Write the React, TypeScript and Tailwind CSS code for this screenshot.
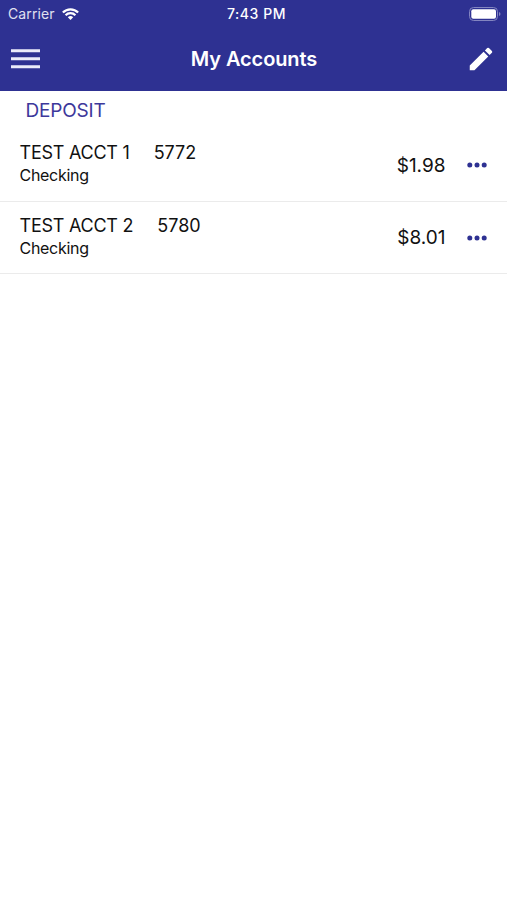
const accounts = [
  { name: "TEST ACCT 1", number: "5772", kind: "Checking", balance: "$1.98" },
  { name: "TEST ACCT 2", number: "5780", kind: "Checking", balance: "$8.01" },
];

export default function App() {
  return (
    <div className="h-[900px] w-[507px] overflow-hidden bg-white font-['Inter',sans-serif] text-[#111]">
      <header className="h-[91px] bg-[#2e3192] text-white">
        <div className="grid h-[27px] grid-cols-3 items-center text-[14px] leading-none">
          <div className="flex items-center gap-[7px] pl-[8px] text-[#e0e0f0]">
            <span className="tracking-[0.1px]">Carrier</span>
            <svg width="17" height="12" viewBox="0 0 17 12" fill="none" stroke="white" strokeWidth="2.3">
              <path d="M.9 4.5a10.7 10.7 0 0 1 15.2 0M3.6 7.2a6.9 6.9 0 0 1 9.8 0" />
              <path d="M8.5 12L5.8 9.3a3.8 3.8 0 0 1 5.4 0z" fill="white" stroke="none" />
            </svg>
          </div>
          <div className="pl-[6px] text-center font-medium tracking-[0.55px]">7:43 PM</div>
          <div className="flex justify-end pr-[6px]">
            <svg width="32" height="14" viewBox="0 0 32 14">
              <rect x=".5" y=".5" width="28" height="13" rx="4" fill="none" stroke="#8385c0" />
              <rect x="2.3" y="2.3" width="24.7" height="9.4" rx="2" fill="white" />
              <path d="M30 5v4q1.5-.6 1.5-2T30 5" fill="#8385c0" />
            </svg>
          </div>
        </div>
        <div className="flex h-16 items-center justify-between pl-[11px] pr-[11px]">
          <svg width="29" height="20" viewBox="0 0 29 20" stroke="#ebebfa" strokeWidth="3">
            <path d="M0 1.8h29M0 9.8h29M0 17.8h29" />
          </svg>
          <h1 className="-mr-0.5 text-[20px] font-semibold tracking-[-0.1px]">My Accounts</h1>
          <svg className="mb-px" width="30" height="30" viewBox="0 0 24 24" fill="white">
            <path d="M3 17.25V21h3.75L17.81 9.94l-3.75-3.75zM20.71 7.04a1 1 0 0 0 0-1.41l-2.34-2.34a1 1 0 0 0-1.41 0l-1.83 1.83 3.75 3.75z" />
          </svg>
        </div>
      </header>
      <main>
        <h2 className="h-[38px] pl-[25.5px] pt-[5.5px] text-[19px] leading-7 tracking-[-0.2px] text-[#3d389b]">DEPOSIT</h2>
        {accounts.map((a) => (
          <div key={a.number} className="flex h-[72.7px] items-center border-b border-[#ebebeb] pl-[19.5px] pr-[20.5px]">
            <div className="flex-1">
              <div className="flex gap-6 text-[18px] leading-6">
                <span className="tracking-[-0.24px]">{a.name}</span>
                <span>{a.number}</span>
              </div>
              <div className="-mt-[2px] mb-[2px] text-[16px] leading-6 tracking-[-0.3px]">{a.kind}</div>
            </div>
            <span className="pt-[2px] text-[19px]">{a.balance}</span>
            <svg className="ml-[21px]" width="20" height="6" viewBox="0 0 20 6" fill="#2e3192">
              <circle cx="2.8" cy="3" r="2.5" />
              <circle cx="10" cy="3" r="2.5" />
              <circle cx="17.2" cy="3" r="2.5" />
            </svg>
          </div>
        ))}
      </main>
    </div>
  );
}
